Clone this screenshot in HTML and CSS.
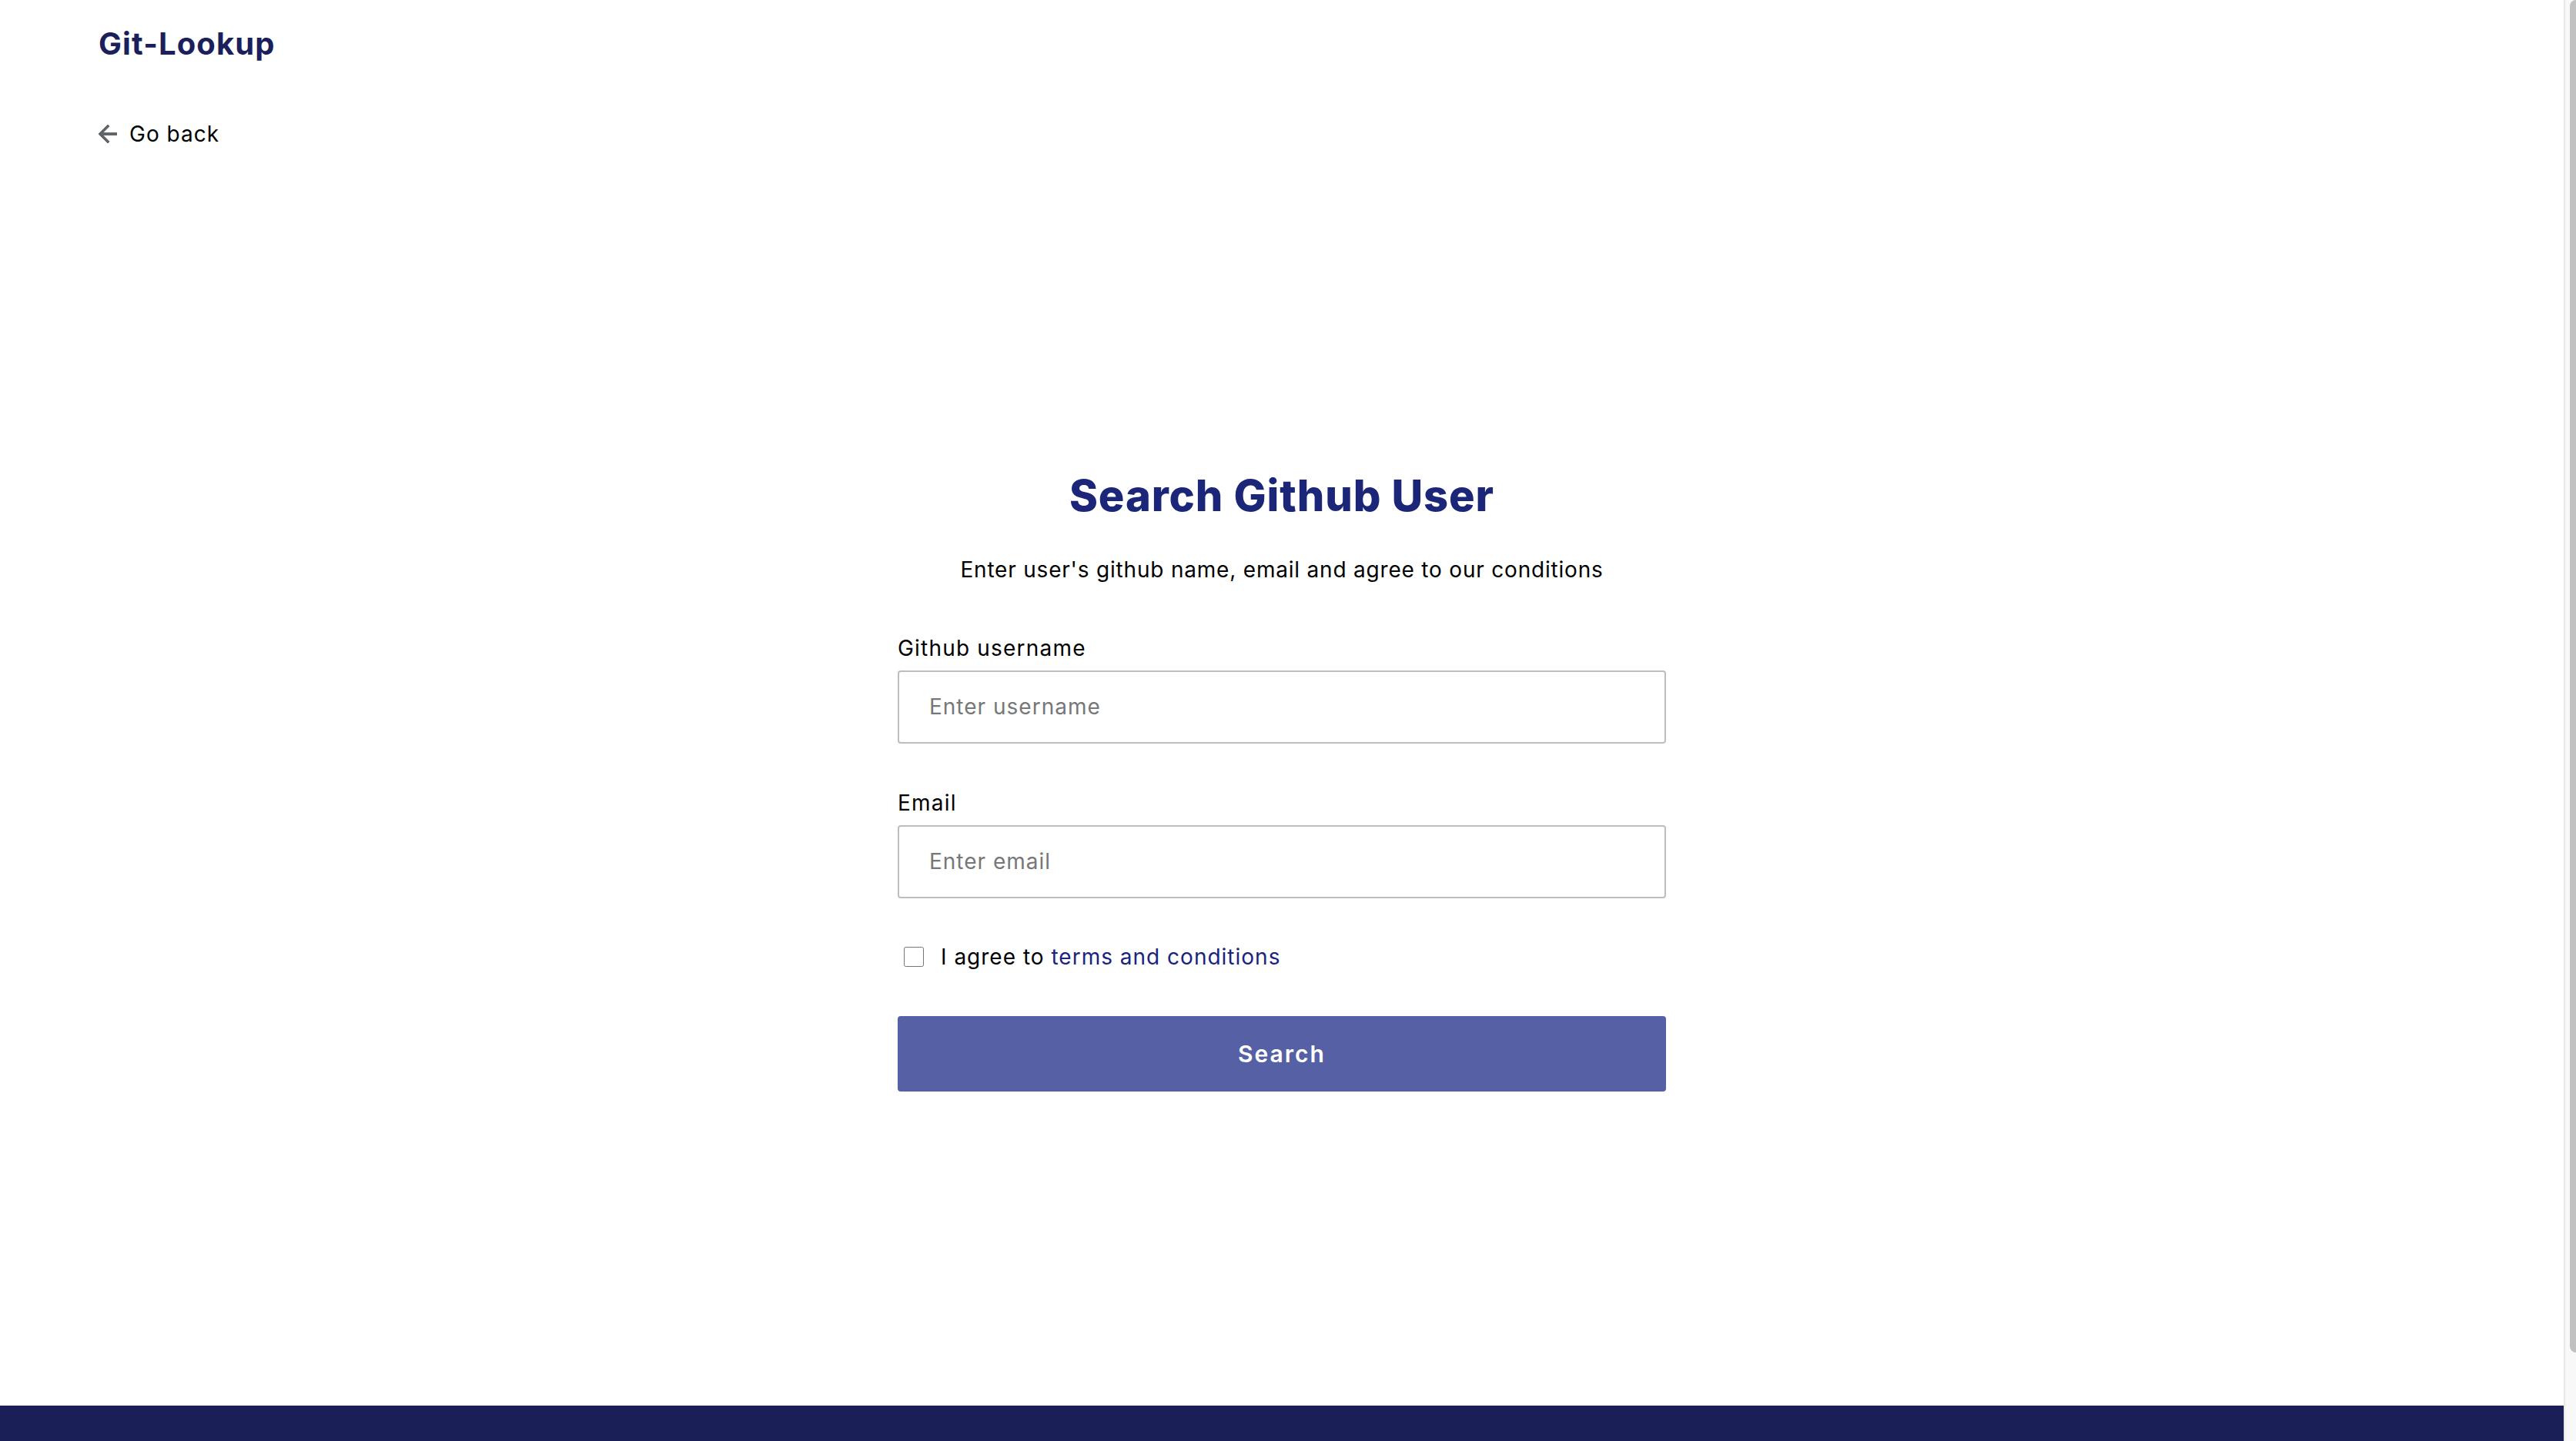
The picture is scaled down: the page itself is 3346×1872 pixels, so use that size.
FILE: index.html
```html
<!DOCTYPE html>
<html lang="en">
<head>
<meta charset="utf-8">
<title>Git-Lookup</title>
<link rel="stylesheet" href="styles.css">
</head>
<body>
<div class="app">
  <div class="page">
    <header class="header">
      <div class="logo">Git-Lookup</div>
      <a class="back" href="#">
        <svg class="back-icon" viewBox="4 4 16 16" width="24" height="24"><path fill="currentColor" stroke="currentColor" stroke-width="0.6" stroke-linejoin="round" d="M20 11H7.83l5.59-5.59L12 4l-8 8 8 8 1.41-1.41L7.83 13H20v-2z"/></svg>
        <span class="back-text">Go back</span>
      </a>
    </header>
    <main class="main">
      <h1 class="title">Search Github User</h1>
      <p class="subtitle">Enter user's github name, email and agree to our conditions</p>
      <form class="form">
        <label class="label" for="username">Github username</label>
        <input class="input" id="username" type="text" placeholder="Enter username">
        <label class="label label-gap" for="email">Email</label>
        <input class="input" id="email" type="email" placeholder="Enter email">
        <div class="agree">
          <input class="check" type="checkbox" id="agree">
          <label class="agree-text" for="agree">I agree to <a class="link" href="#">terms and conditions</a></label>
        </div>
        <button class="button" type="button">Search</button>
      </form>
    </main>
  </div>
  <footer class="footer"></footer>
</div>
<div class="scrollbar"><div class="thumb"></div></div>
</body>
</html>
```
FILE: styles.css
```css
body {
  margin: 0;
  font-family: Inter, "Open Sans", sans-serif;
  color: #000;
  background: #fff;
  display: flex;
  align-items: flex-start;
}
.app {
  flex: 1;
  min-width: 0;
}
.scrollbar {
  flex: none;
  width: 16px;
  height: 1872px;
  box-sizing: border-box;
  border-left: 2px solid #e8e8e8;
  background: #f8f8f8;
  padding-left: 6px;
}
.thumb {
  height: 1757px;
  background: #c1c1c1;
  border-radius: 8px 0 0 8px;
}
.page {
  min-height: 1826px;
  display: flex;
  flex-direction: column;
}
.header {
  padding: 33px 128px 0;
  display: flex;
  flex-direction: column;
  align-items: flex-start;
}
.logo {
  font-size: 40px;
  line-height: 48px;
  font-weight: 700;
  color: #1b1f5b;
  letter-spacing: 1.1px;
}
.back {
  margin-top: 73px;
  display: flex;
  align-items: center;
  gap: 16px;
  color: #000;
  text-decoration: none;
}
.back-icon {
  color: #60646a;
  flex: none;
}
.back-text {
  font-size: 28px;
  line-height: 40px;
  letter-spacing: 1px;
}
.main {
  display: flex;
  flex-direction: column;
  align-items: center;
  padding-top: 416px;
}
.title {
  margin: 0;
  font-size: 56px;
  line-height: 68px;
  font-weight: 800;
  color: #1b2679;
  letter-spacing: 0.9px;
}
.subtitle {
  margin: 42px 0 0;
  font-size: 28px;
  line-height: 40px;
  letter-spacing: 0.8px;
}
.form {
  margin-top: 62px;
  width: 998px;
  display: flex;
  flex-direction: column;
}
.label {
  font-size: 28px;
  line-height: 40px;
  letter-spacing: 1.2px;
}
.label-gap {
  margin-top: 57px;
}
.input {
  margin-top: 9px;
  height: 95px;
  box-sizing: border-box;
  border: 2px solid #bdbdbd;
  border-radius: 4px;
  padding: 0 39px 2px;
  font-family: inherit;
  font-size: 28px;
  letter-spacing: 1px;
  color: #000;
  outline: none;
}
.input::placeholder {
  color: #777;
}
.agree {
  margin-top: 56px;
  display: flex;
  align-items: center;
  height: 40px;
}
.check {
  margin: 0 0 0 8px;
  width: 26px;
  height: 26px;
  flex: none;
}
.agree-text {
  margin-left: 22px;
  font-size: 28px;
  line-height: 40px;
  letter-spacing: 1px;
}
.link {
  color: #1a237e;
  text-decoration: none;
}
.button {
  margin-top: 57px;
  height: 98px;
  border: none;
  border-radius: 4px;
  background: #5560a5;
  color: #fff;
  font-family: inherit;
  font-size: 30px;
  font-weight: 600;
  letter-spacing: 2px;
  cursor: pointer;
}
.footer {
  height: 164px;
  background: #1b1f58;
}
```
